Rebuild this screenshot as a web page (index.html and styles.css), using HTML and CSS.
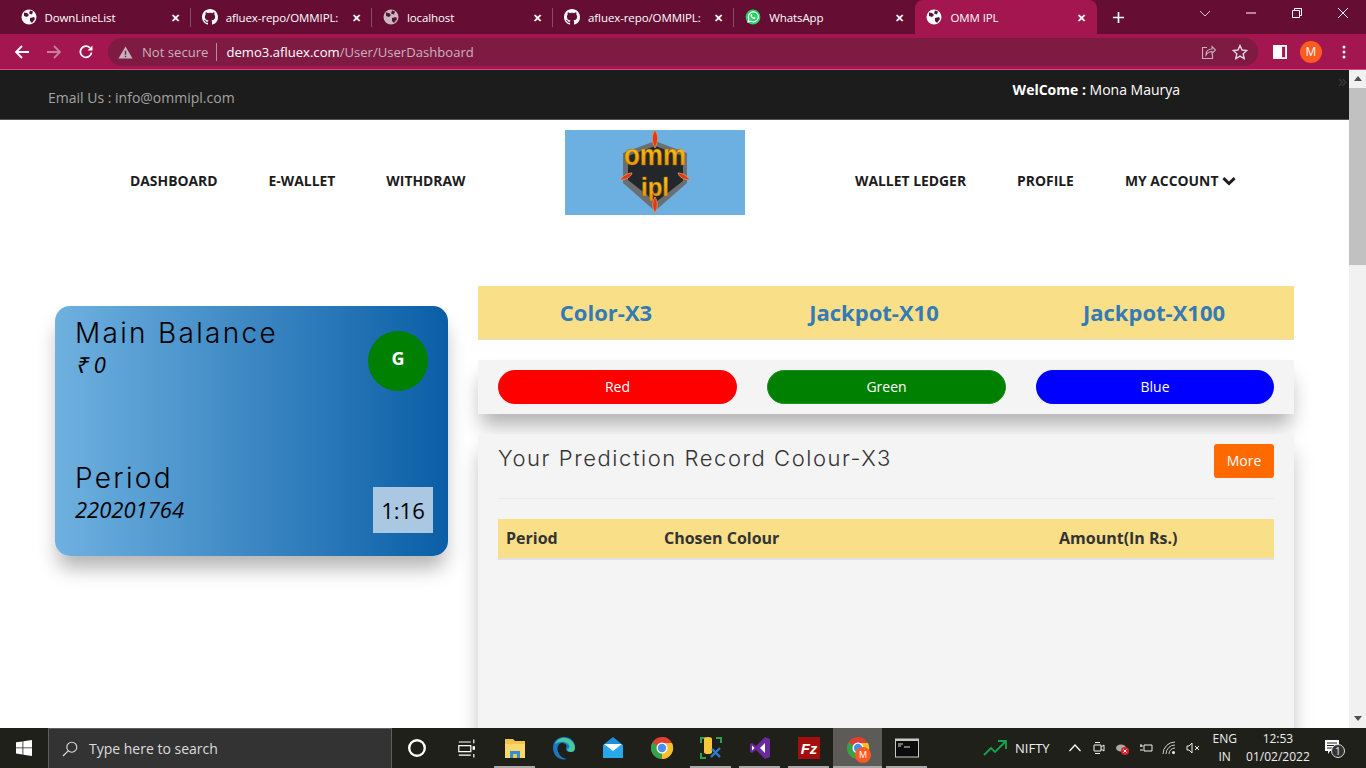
FILE: index.html
```html
<!DOCTYPE html>
<html lang="en">
<head>
  <meta charset="UTF-8" />
  <meta name="viewport" content="width=device-width, initial-scale=1.0" />
  <title>OMM IPL</title>
  <link rel="stylesheet" href="styles.css">
</head>
<body>
  <div class="tabstrip">
    <div class="tab"><svg class="tab-icon" viewBox="0 0 16 16"><use href="#globe"/></svg><span class="tab-title">DownLineList</span><span class="tab-close">&#10005;</span></div>
    <div class="tab"><svg class="tab-icon" viewBox="0 0 16 16"><use href="#github"/></svg><span class="tab-title">afluex-repo/OMMIPL:</span><span class="tab-close">&#10005;</span></div>
    <div class="tab"><svg class="tab-icon dim" viewBox="0 0 16 16"><use href="#globe"/></svg><span class="tab-title">localhost</span><span class="tab-close">&#10005;</span></div>
    <div class="tab"><svg class="tab-icon" viewBox="0 0 16 16"><use href="#github"/></svg><span class="tab-title">afluex-repo/OMMIPL:</span><span class="tab-close">&#10005;</span></div>
    <div class="tab no-sep"><svg class="tab-icon" viewBox="0 0 16 16"><circle cx="8" cy="8" r="7.4" fill="#25d366"/><path d="M3 13l.9-3A5 5 0 1 1 6 12.2z" fill="none" stroke="#fff" stroke-width="1.2"/><path d="M6 5.2c-.9.9-.3 2.4.9 3.7 1.2 1.2 2.6 1.6 3.3.8l.3-.9-1.3-.8-.6.6c-.8-.3-1.4-1-1.7-1.7l.5-.6-.7-1.3z" fill="#fff"/></svg><span class="tab-title">WhatsApp</span><span class="tab-close">&#10005;</span></div>
    <div class="tab active"><svg class="tab-icon" viewBox="0 0 16 16"><use href="#globe"/></svg><span class="tab-title">OMM IPL</span><span class="tab-close">&#10005;</span></div>
    <svg class="new-tab" viewBox="0 0 14 14"><path d="M7 1v12M1 7h12" stroke="#fff" stroke-width="1.8"/></svg>
    <div class="win-controls">
      <svg viewBox="0 0 12 12"><path d="M1 4l5 5 5-5" fill="none" stroke="#d9c3cd" stroke-width="1"/></svg>
      <svg viewBox="0 0 12 12"><path d="M1 6h10" stroke="#fff" stroke-width="1"/></svg>
      <svg viewBox="0 0 12 12"><path d="M1.5 3.5h7v7h-7zM3.5 3.5v-2h7v7h-2" fill="none" stroke="#fff" stroke-width="1"/></svg>
      <svg viewBox="0 0 12 12"><path d="M1 1l10 10M11 1L1 11" stroke="#fff" stroke-width="1"/></svg>
    </div>
  </div>

  <div class="toolbar">
    <svg class="nav-btn" viewBox="0 0 16 16"><path d="M15 8H2M8 2L2 8l6 6" fill="none" stroke="#fff" stroke-width="1.8"/></svg>
    <svg class="nav-btn" viewBox="0 0 16 16"><path d="M1 8h13M8 2l6 6-6 6" fill="none" stroke="#c9809c" stroke-width="1.8"/></svg>
    <svg class="nav-btn" viewBox="0 0 16 16"><path d="M13.5 8.5A5.6 5.6 0 1 1 12 3.9" fill="none" stroke="#fff" stroke-width="1.8"/><path d="M14.5 1.5v5h-5z" fill="#fff"/></svg>
    <div class="omnibox">
      <svg class="warn" viewBox="0 0 16 16"><path d="M8 1.5L15.5 14.500H.5z" fill="#c5b3bb"/><path d="M8 6v4.500M8 11.500v1.500" stroke="#7f1a43" stroke-width="1.500"/></svg>
      <span class="not-secure">Not secure</span>
      <span class="url"><b>demo3.afluex.com</b>/User/UserDashboard</span>
      <svg class="omni-icon share" viewBox="0 0 16 16"><path d="M7 3.500H2.500v11h10V10M6 11c0-4 2.500-6 6-6V2.500L15.500 6 12 9.500V7.500c-2.500 0-4.500 1-6 3.500z" fill="none" stroke="#c5b3bb" stroke-width="1.100"/></svg>
      <svg class="omni-icon" viewBox="0 0 16 16"><path d="M8 1.500l2 4.500 4.800.5-3.600 3.200 1 4.800L8 12.100l-4.200 2.400 1-4.800L1.200 6.500 6 6z" fill="none" stroke="#e6d5dc" stroke-width="1.400"/></svg>
    </div>
    <svg class="side-panel" viewBox="0 0 12 12"><path d="M.8.800h10.400v10.400H.8z" fill="none" stroke="#fff" stroke-width="1.600"/><path d="M.8.800h7v10.400h-7z" fill="#fff"/></svg>
    <span class="avatar">M</span>
    <svg class="kebab" viewBox="0 0 4 16"><circle cx="2" cy="3" r="1.500"/><circle cx="2" cy="8" r="1.500"/><circle cx="2" cy="13" r="1.500"/></svg>
  </div>

  <div class="viewport">
    <div class="page">
      <div class="topbar">
        <span class="topbar-mail">Email Us : info@ommipl.com</span>
        <span class="topbar-user"><b>WelCome :</b> Mona Maurya</span>
        <svg class="topbar-more" viewBox="0 0 8 8"><path d="M1 1l3 3-3 3M4 1l3 3-3 3" fill="none" stroke="#3d3d3d" stroke-width="1"/></svg>
      </div>

      <nav class="mainnav">
        <div class="nav-left">
          <a>DASHBOARD</a>
          <a>E-WALLET</a>
          <a>WITHDRAW</a>
        </div>
        <svg class="logo" viewBox="0 0 180 85">
          <defs>
            <linearGradient id="gold" x1="0" y1="0" x2="0" y2="1">
              <stop offset="0" stop-color="#ffd21e"/>
              <stop offset="1" stop-color="#e58f00"/>
            </linearGradient>
          </defs>
          <rect width="180" height="85" fill="#6cb0e2"/>
          <path d="M90 11l32 12v30L90 81 58 53V23z" fill="#6b6f73"/>
          <path d="M90 16l28 10v25L91 72 63 50V26z" fill="#23272c"/>
          <path d="M90 0c3 5 4 10 0 18-4-8-3-13 0-18zM90 67c3 5 3 10 0 16-3-6-3-11 0-16z" fill="#e8341c" stroke="#d8a24a" stroke-width=".8"/>
          <path d="M55 50c3-4 7-7 12-7-1 4-6 7-12 7zM125 50c-3-4-7-7-12-7 1 4 6 7 12 7z" fill="#e8341c" stroke="#d8a24a" stroke-width=".8"/>
          <text class="logo-word" x="90" y="35" text-anchor="middle" textLength="62" lengthAdjust="spacingAndGlyphs">omm</text>
          <text class="logo-word small" x="90" y="66" text-anchor="middle" textLength="28" lengthAdjust="spacingAndGlyphs">ipl</text>
        </svg>
        <div class="nav-right">
          <a>WALLET LEDGER</a>
          <a>PROFILE</a>
          <a class="has-caret">MY ACCOUNT <svg viewBox="0 0 12 8"><path d="M1.200 1.500L6 6.200l4.800-4.700" fill="none" stroke="#1c1c1c" stroke-width="2.500"/></svg></a>
        </div>
      </nav>

      <main class="dash">
        <section class="balance-card">
          <div class="card-row">
            <div>
              <h3 class="card-label">Main Balance</h3>
              <div class="card-value">&#8377; 0</div>
            </div>
            <div class="last-result">G</div>
          </div>
          <div class="card-row bottom">
            <div class="period">
              <h3 class="card-label">Period</h3>
              <div class="card-value">220201764</div>
            </div>
            <div class="timer">1:16</div>
          </div>
        </section>

        <section class="game">
          <div class="game-tabs">
            <a>Color-X3</a>
            <a>Jackpot-X10</a>
            <a>Jackpot-X100</a>
          </div>
          <div class="pick-panel">
            <button class="pick red">Red</button>
            <button class="pick green">Green</button>
            <button class="pick blue">Blue</button>
          </div>
          <div class="record-panel">
            <div class="record-head">
              <h4>Your Prediction Record Colour-X3</h4>
              <button class="more">More</button>
            </div>
            <table class="record-table">
              <thead>
                <tr><th class="col-period">Period</th><th class="col-colour">Chosen Colour</th><th>Amount(In Rs.)</th></tr>
              </thead>
            </table>
          </div>
        </section>
      </main>
    </div>
    <div class="scrollbar">
      <span class="arrow up"></span>
      <div class="thumb"></div>
      <span class="arrow down"></span>
    </div>
  </div>

  <footer class="taskbar">
    <svg class="start" viewBox="0 0 16 16"><path d="M0 2.300l6.500-.9v6.100H0zM7.300 1.300L16 0v7.500H7.300zM0 8.300h6.500v6.200L0 13.600zM7.300 8.300H16V16l-8.700-1.300z" fill="#fff"/></svg>
    <div class="search">
      <svg viewBox="0 0 16 16"><circle cx="9.800" cy="6.200" r="5" fill="none" stroke="#ddd" stroke-width="1.100"/><path d="M6.200 9.800L1 15" stroke="#ddd" stroke-width="1.200"/></svg>
      <span>Type here to search</span>
    </div>
    <div class="apps">
      <div class="app"><svg viewBox="0 0 20 20"><circle cx="10" cy="10" r="6.500" fill="none" stroke="#fff" stroke-width="2"/></svg></div>
      <div class="app"><svg viewBox="0 0 20 20"><path d="M4 5h10M4 16h10M4 8h10v5H4z" fill="none" stroke="#fff" stroke-width="1"/><path d="M16.500 3v3M16.500 15v3" stroke="#fff"/><rect x="15.500" y="8.500" width="2" height="3" fill="#fff"/></svg></div>
      <div class="app running"><svg viewBox="0 0 24 24"><path d="M2 3h8l2 2h10v17H2z" fill="#f3c44c"/><path d="M2 8h20v14H2z" fill="#fbd869"/><rect x="7" y="15" width="10" height="7" fill="#2f8fd8"/><rect x="10" y="18" width="4" height="4" fill="#f3c44c"/></svg></div>
      <div class="app"><svg viewBox="0 0 24 24"><path d="M1 12C1 5 6 1 12 1c7 0 11 5 11 10 0 3-2 5-5 5-2 0-4-1-4-3 0-1 .5-1.500.5-2.500C14.500 8 12 6.500 9.500 7 5 8 4.500 14 7 18c1.500 2.500 4 4.500 8 5C7 25 1 19 1 12z" fill="#1878c8"/><path d="M3 8c2-5 7-7 11-6 5 1 9 5 9 10 0 3-2 4-4 4s-4-1-4-3c2 0 3-2 2-4-2-3-8-5-14-1z" fill="#46c9a0"/></svg></div>
      <div class="app"><svg viewBox="0 0 24 24"><path d="M12 1l10 8v13H2V9z" fill="#1c90dc"/><path d="M2 9h20v13H2z" fill="#27a8ec"/><path d="M3 8h18l-9 7z" fill="#fff"/></svg></div>
      <div class="app"><svg viewBox="0 0 24 24"><circle cx="12" cy="12" r="11" fill="#e0402f"/><path d="M12 12L2.500 6.500A11 11 0 0 0 12 23z" fill="#36a24a"/><path d="M12 1a11 11 0 0 1 9.700 5.800H12z" fill="#e0402f"/><path d="M12 7h10a11 11 0 0 1-10 16z" fill="#f6c02c"/><circle cx="12" cy="12" r="5.500" fill="#fff"/><circle cx="12" cy="12" r="4.200" fill="#4a8df0"/></svg></div>
      <div class="app running"><svg viewBox="0 0 24 24"><path d="M1 1h6v2H3v4H1zM17 1h6v6h-2V3h-4zM1 17h2v4h4v2H1z" fill="#2fa04a"/><path d="M5 3a4 2 0 0 1 8 0v13a4 2 0 0 1-8 0z" fill="#f4c93e"/><path d="M13 13l8 8M21 12l-9 9" stroke="#2a7fd0" stroke-width="2.400"/></svg></div>
      <div class="app running"><svg viewBox="0 0 24 24"><path d="M17 1l5 2v18l-5 2-9-9-4 3-2-1V8l2-1 4 3z" fill="#6a2a9c"/><path d="M17 7l-5 5 5 5zM4 9.500v5l2.500-2.500z" fill="#fff"/></svg></div>
      <div class="app running"><svg viewBox="0 0 24 24"><rect x="1" y="1" width="22" height="22" fill="#a50e0e"/><text class="fz" x="12" y="18" text-anchor="middle">Fz</text></svg></div>
      <div class="app running current"><svg viewBox="0 0 24 24"><circle cx="12" cy="12" r="11" fill="#e0402f"/><path d="M12 12L2.500 6.500A11 11 0 0 0 12 23z" fill="#36a24a"/><path d="M12 7h10a11 11 0 0 1-10 16z" fill="#f6c02c"/><circle cx="12" cy="12" r="5.500" fill="#fff"/><circle cx="12" cy="12" r="4.200" fill="#4a8df0"/></svg><span class="app-badge">M</span></div>
      <div class="app running"><svg viewBox="0 0 24 24"><rect x=".5" y="3" width="23" height="18" fill="#0c0c0c" stroke="#c9c9c9" stroke-width="1"/><rect x=".5" y="3" width="23" height="2" fill="#c9c9c9"/><path d="M3 8h5M3 10h3M9 11h6" stroke="#ddd" stroke-width="1"/></svg></div>
    </div>
    <div class="ticker">
      <svg viewBox="0 0 24 16"><path d="M1 15l7-7 4 4 10-10M15 1h8v8" fill="none" stroke="#16a34a" stroke-width="1.800"/></svg>
      <span>NIFTY</span>
    </div>
    <div class="tray">
      <svg viewBox="0 0 14 14"><path d="M1.500 10L7 4l5.500 6" fill="none" stroke="#fff" stroke-width="1.200"/></svg>
      <svg viewBox="0 0 14 14"><path d="M2 4h7v6H2zM9 6l3-2v6l-3-2M3 1.500h5M3 12.500h5" fill="none" stroke="#eee"/></svg>
      <svg viewBox="0 0 14 14"><ellipse cx="6" cy="7" rx="5" ry="3.500" fill="#aaa"/><circle cx="10" cy="10" r="4" fill="#d8232a"/><path d="M8.500 8.500l3 3M11.500 8.500l-3 3" stroke="#fff"/></svg>
      <svg viewBox="0 0 14 14"><path d="M5 4h8v6H5zM1 5h3M1 9h3M2 3v3" fill="none" stroke="#eee"/></svg>
      <svg viewBox="0 0 14 14"><path d="M1 13A12 12 0 0 1 13 1M4 13a9 9 0 0 1 9-9M7 13a6 6 0 0 1 6-6" fill="none" stroke="#ccc"/><circle cx="11.500" cy="11.500" r="1.500" fill="#eee"/></svg>
      <svg viewBox="0 0 14 14"><path d="M1 5h2l3-3v10L3 9H1zM9 5l4 4M13 5L9 9" fill="none" stroke="#eee"/></svg>
    </div>
    <div class="lang"><span>ENG</span><span>IN</span></div>
    <div class="clock"><span>12:53</span><span>01/02/2022</span></div>
    <div class="notify">
      <svg viewBox="0 0 16 16"><path d="M1 1h14v11H6l-2 3v-3H1z" fill="#fff"/><path d="M3 4h10M3 6.500h10M3 9h7" stroke="#222"/></svg>
      <span class="notify-count">1</span>
    </div>
  </footer>

  <svg class="defs" width="0" height="0">
    <symbol id="globe" viewBox="0 0 16 16"><circle cx="8" cy="8" r="7.500" fill="currentColor"/><path d="M3 3.500l3 .5 2 2-2 2-3-1zM9 1.500l3 1-1 3-3-1zM9 9l4-1 1 2-3 4-2-2z" fill="#5d1032"/></symbol>
    <symbol id="github" viewBox="0 0 16 16"><path fill="currentColor" d="M8 0C3.580 0 0 3.580 0 8c0 3.540 2.290 6.530 5.470 7.590.4.070.55-.17.550-.38 0-.19-.01-.82-.01-1.490-2.010.37-2.530-.49-2.690-.94-.09-.23-.48-.94-.82-1.130-.28-.15-.68-.52-.01-.53.630-.01 1.080.58 1.230.82.720 1.210 1.870.87 2.330.66.070-.52.280-.87.510-1.070-1.780-.2-3.640-.89-3.640-3.950 0-.87.310-1.590.820-2.150-.08-.2-.36-1.020.08-2.120 0 0 .67-.21 2.200.82.640-.18 1.320-.27 2-.27s1.360.09 2 .27c1.530-1.040 2.200-.82 2.200-.82.440 1.100.16 1.920.08 2.120.51.560.82 1.270.82 2.150 0 3.070-1.870 3.750-3.650 3.950.29.250.54.730.54 1.480 0 1.070-.01 1.930-.01 2.200 0 .21.150.46.550.38A8.010 8.010 0 0 0 16 8c0-4.420-3.580-8-8-8z"/></symbol>
  </svg>
</body>
</html>
```

FILE: styles.css
```css
:root {
  --strip: #660d33;
  --chrome: #a3164f;
  --omni: #7f1a43;
  --sand: #f9df87;
  --panel: #f4f4f4;
  --ink: #1c1c1c;
  --tabs-blue: #337ab7;
  --lift: 0 15px 20px -3px rgba(0, 0, 0, .3);
}

* { box-sizing: border-box; }

html, body {
  margin: 0;
  height: 100%;
  overflow: hidden;
  font-family: 'Open Sans', sans-serif;
  background: #fff;
}

body {
  display: flex;
  flex-direction: column;
  height: 768px;
}

.defs { display: none; }

/* browser tabs */
.tabstrip {
  display: flex;
  align-items: center;
  height: 34px;
  padding-left: 9.500px;
  background: var(--strip);
  color: #fff;
  flex: none;
}

.tab {
  display: flex;
  align-items: center;
  width: 181.200px;
  height: 34px;
  padding: 0 10px 0 11px;
  font-size: 11.500px;
  position: relative;
}

.tab::after {
  content: "";
  position: absolute;
  right: 0;
  top: 8px;
  height: 19px;
  width: 1px;
  background: #8b4a66;
}

.tab.no-sep::after, .tab.active::after { display: none; }

.tab.active {
  background: var(--chrome);
  border-radius: 8px 8px 0 0;
}

.tab-icon {
  width: 16px;
  height: 16px;
  margin-right: 8px;
  flex: none;
  color: #fff;
}

.tab-icon.dim { color: #c9b8bf; }

.tab-title {
  flex: 1;
  white-space: nowrap;
  overflow: hidden;
  letter-spacing: -.1px;
}

.tab-close {
  font-size: 11px;
  font-weight: bold;
  margin: 0 1px 0 5px;
}

.new-tab {
  width: 13px;
  height: 13px;
  margin-left: 15px;
}

.win-controls {
  display: flex;
  margin-left: auto;
  gap: 34px;
  padding-right: 17px;
  margin-top: -8px;
}

.win-controls svg {
  width: 12px;
  height: 12px;
}

/* address bar */
.toolbar {
  display: flex;
  align-items: center;
  height: 36px;
  padding: 4px 0 3px 14px;
  background: var(--chrome);
  border-bottom: 1px solid #d64f80;
  flex: none;
}

.nav-btn {
  width: 16px;
  height: 16px;
  margin-right: 16px;
  flex: none;
}

.omnibox {
  display: flex;
  align-items: center;
  width: 1150px;
  height: 28px;
  margin-left: -2px;
  padding: 0 10px;
  border-radius: 14px;
  background: var(--omni);
  font-size: 13.100px;
  white-space: nowrap;
}

.warn {
  width: 15px;
  height: 15px;
  margin-right: 9px;
}

.not-secure {
  color: #c5b3bb;
  padding-right: 8px;
  border-right: 1px solid #b58a9d;
  line-height: 18px;
}

.url {
  margin-left: 9px;
  color: #c9b3bd;
}

.url b {
  font-weight: normal;
  color: #fff;
}

.omni-icon {
  width: 16px;
  height: 16px;
  margin-left: 16px;
}

.omni-icon.share { margin-left: auto; }

.side-panel {
  width: 14px;
  height: 14px;
  margin-left: 15px;
}

.avatar {
  width: 22px;
  height: 22px;
  margin-left: 13px;
  border-radius: 50%;
  background: #ff5a1f;
  color: #fff;
  font-size: 12px;
  line-height: 22px;
  text-align: center;
}

.kebab {
  width: 4px;
  height: 16px;
  margin-left: 20px;
  fill: #fff;
}

/* page */
.viewport {
  display: flex;
  flex: 1;
  min-height: 0;
}

.page {
  flex: 1;
  min-width: 0;
  overflow: hidden;
}

.topbar {
  display: flex;
  height: 50px;
  padding-left: 48px;
  background: var(--ink);
  border-bottom: 1px solid #555;
  font-size: 14px;
  position: relative;
}

.topbar-mail {
  color: #a3a3a3;
  margin-top: 18px;
}

.topbar-user {
  color: #fff;
  margin-left: 778px;
  margin-top: 10px;
}

.topbar-more {
  position: absolute;
  right: 2px;
  top: 8px;
  width: 9px;
  height: 9px;
}

.mainnav {
  display: flex;
  height: 166px;
  padding-top: 10px;
}

.nav-left, .nav-right {
  display: flex;
  gap: 51px;
  height: 85px;
  padding-top: 41px;
  font-size: 13.900px;
  font-weight: 700;
  color: var(--ink);
  white-space: nowrap;
}

.nav-left {
  width: 565px;
  padding-left: 130px;
}

.nav-right { padding-left: 110px; }

.has-caret svg {
  width: 14px;
  height: 10px;
  margin-left: 0;
}

.logo {
  width: 180px;
  height: 85px;
  flex: none;
}

.logo-word {
  font-family: 'Liberation Sans', sans-serif;
  font-size: 30px;
  font-weight: 700;
  fill: url(#gold);
  stroke: #a85f08;
  stroke-width: .5px;
}

.logo-word.small { font-size: 26px; }

.dash {
  display: grid;
  grid-template-columns: 393px 816px;
  column-gap: 30px;
  padding: 0 55px;
  align-items: start;
}

/* left balance card */
.balance-card {
  display: flex;
  flex-direction: column;
  justify-content: space-between;
  height: 250px;
  margin-top: 20px;
  padding: 10px 15px 23px 20px;
  border-radius: 15px;
  background: linear-gradient(90deg, #6fb1e0, #0a5ea6);
  box-shadow: var(--lift);
  color: #000;
}

.card-row {
  display: flex;
  justify-content: space-between;
  align-items: flex-start;
}

.card-row.bottom { align-items: flex-end; }

.period { padding-bottom: 10px; }

.card-label {
  margin: 0;
  font-family: 'Inter', sans-serif;
  font-size: 28px;
  font-weight: 300;
  letter-spacing: 2.300px;
  line-height: 34px;
}

.card-value {
  font-size: 22px;
  font-style: italic;
  line-height: 28px;
}

.last-result {
  width: 60px;
  height: 60px;
  margin: 15px 5px 0 0;
  border-radius: 50%;
  background: #008000;
  color: #fff;
  font-size: 18px;
  font-weight: 700;
  line-height: 54px;
  text-align: center;
}

.timer {
  width: 60px;
  height: 46px;
  background: #abc8e2;
  font-size: 22px;
  line-height: 46px;
  text-align: center;
}

/* right column */
.game-tabs {
  display: grid;
  grid-template-columns: 256px 280px 280px;
  height: 54px;
  background: var(--sand);
  border-bottom: 1px solid #e6e0c8;
  color: var(--tabs-blue);
  font-size: 22px;
  font-weight: 700;
  line-height: 53px;
  text-align: center;
}

.pick-panel {
  display: grid;
  grid-template-columns: 239px 239px 238px;
  column-gap: 30px;
  height: 54px;
  margin-top: 20px;
  padding: 10px 20px;
  background: var(--panel);
  box-shadow: var(--lift);
}

.pick {
  height: 34px;
  padding: 0 0 2px;
  border: 1px solid transparent;
  border-radius: 17px;
  color: #fff;
  font-family: inherit;
  font-size: 14px;
}

.pick.red { background: #f00; }
.pick.green { background: #008000; border-color: #1f8f1f; }
.pick.blue { background: #00f; }

.record-panel {
  height: 400px;
  margin-top: 20px;
  padding: 10px 20px;
  background: var(--panel);
  box-shadow: var(--lift);
  position: relative;
}

.record-head {
  display: flex;
  justify-content: space-between;
  align-items: flex-start;
  height: 55px;
  border-bottom: 1px solid #ececec;
}

.record-head h4 {
  margin: 0;
  font-family: 'Inter', sans-serif;
  font-size: 22px;
  font-weight: 300;
  letter-spacing: 1.550px;
  line-height: 28px;
  color: #333;
}

.more {
  width: 60px;
  height: 34px;
  padding: 0 0 2px;
  border: 0;
  border-radius: 3px;
  background: #ff6a00;
  color: #fff;
  font-family: inherit;
  font-size: 14px;
}

.record-table {
  width: 100%;
  margin-top: 20px;
  border-collapse: collapse;
  table-layout: fixed;
}

.record-table th {
  height: 40px;
  padding: 0 8px 1px;
  background: var(--sand);
  border-bottom: 2px solid #dee2e6;
  color: #333;
  font-size: 16px;
  font-weight: 700;
  text-align: left;
}

.col-period { width: 158px; }
.col-colour { width: 395px; }

/* page scrollbar */
.scrollbar {
  display: flex;
  flex-direction: column;
  width: 17px;
  background: #f1f1f1;
  flex: none;
}

.arrow {
  height: 18px;
  flex: none;
  position: relative;
}

.arrow::after {
  content: "";
  position: absolute;
  left: 5px;
  top: 6px;
  border: 4px solid transparent;
  border-top: 0;
  border-bottom: 5px solid #505050;
}

.arrow.down { margin-top: auto; }

.arrow.down::after {
  transform: rotate(180deg);
}

.thumb {
  height: 177px;
  background: #c1c1c1;
}

/* windows taskbar */
.taskbar {
  display: flex;
  align-items: center;
  height: 40px;
  background: #20201b;
  color: #eee;
  flex: none;
}

.start {
  width: 16px;
  height: 16px;
  margin: 0 16px;
  flex: none;
}

.search {
  display: flex;
  align-items: center;
  width: 344px;
  height: 40px;
  padding-left: 13px;
  background: #333;
  border: 1px solid #5f5f5f;
  border-bottom: 0;
  font-size: 14px;
  color: #ddd;
  flex: none;
}

.search svg {
  width: 16px;
  height: 16px;
  margin-right: 11px;
}

.apps {
  display: flex;
  margin-right: 52px;
  flex: none;
}

.app {
  display: flex;
  align-items: center;
  justify-content: center;
  width: 49px;
  height: 40px;
  position: relative;
}

.app svg {
  width: 24px;
  height: 24px;
}

.app.running::after {
  content: "";
  position: absolute;
  left: 4px;
  right: 4px;
  bottom: 0;
  height: 2px;
  background: #a9a9a9;
}

.app.current { background: #5c5b58; }

.app.current::after {
  left: 0;
  right: 0;
}

.app-badge {
  position: absolute;
  right: 11px;
  bottom: 5px;
  width: 16px;
  height: 16px;
  border-radius: 50%;
  background: #ff5a1f;
  color: #fff;
  font-size: 9px;
  line-height: 16px;
  text-align: center;
}

.fz {
  font-family: 'Liberation Sans', sans-serif;
  font-size: 15px;
  font-style: italic;
  font-weight: 700;
  fill: #fff;
}

.ticker {
  display: flex;
  align-items: center;
  width: 85px;
  font-size: 13px;
  flex: none;
}

.ticker svg {
  width: 24px;
  height: 16px;
  margin-right: 8px;
}

.tray {
  display: flex;
  gap: 9.500px;
  flex: none;
}

.tray svg {
  width: 14px;
  height: 14px;
}

.lang, .clock {
  display: flex;
  flex-direction: column;
  align-items: center;
  font-size: 12px;
  line-height: 18px;
  flex: none;
}

.lang { margin-left: 13px; }

.clock {
  width: 66px;
  margin-left: 8px;
}

.notify {
  width: 20px;
  height: 20px;
  margin-left: 13px;
  position: relative;
}

.notify svg {
  width: 16px;
  height: 16px;
}

.notify-count {
  position: absolute;
  left: 7px;
  top: 6px;
  width: 14px;
  height: 14px;
  border: 1px solid #ddd;
  border-radius: 50%;
  background: #333;
  font-size: 10px;
  line-height: 12px;
  text-align: center;
}
```
